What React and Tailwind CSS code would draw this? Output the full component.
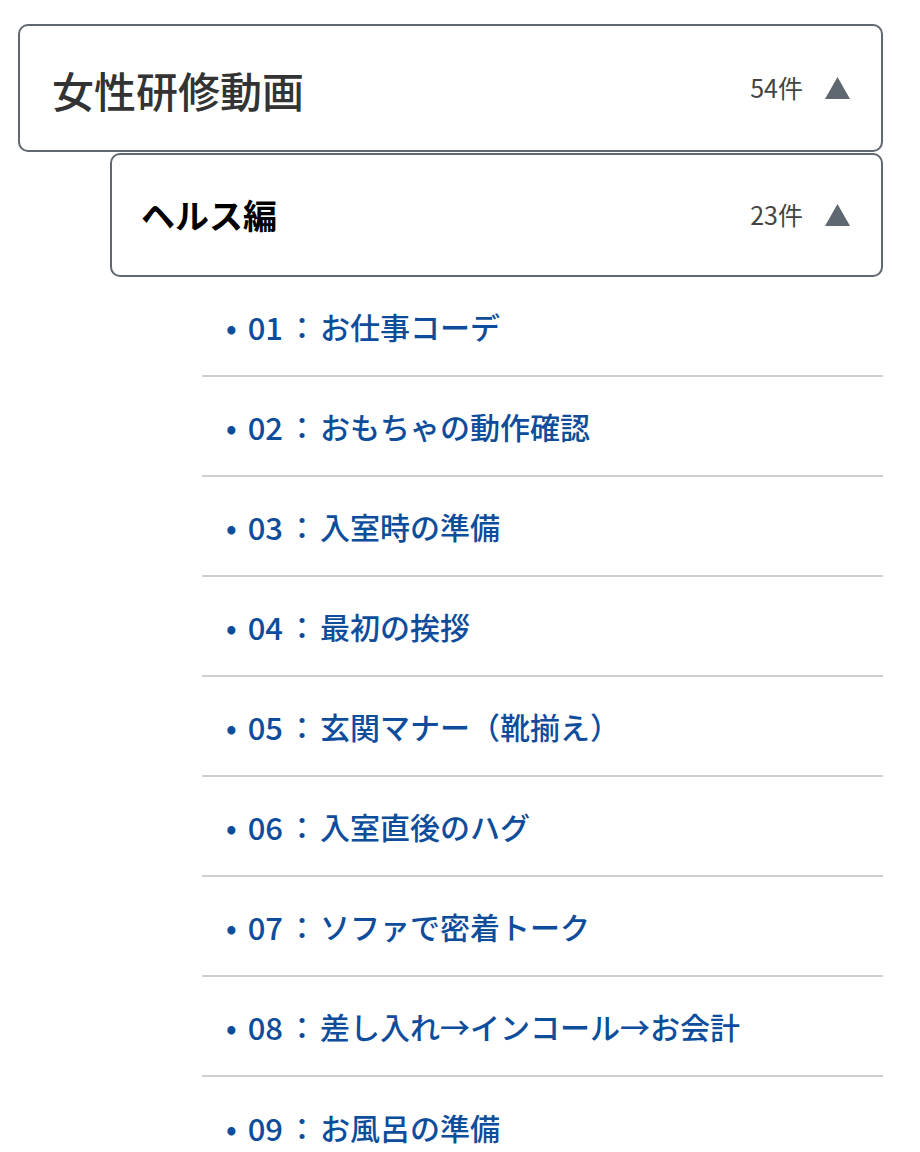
import React from "react";

const items = [
  ["01", "お仕事コーデ"],
  ["02", "おもちゃの動作確認"],
  ["03", "入室時の準備"],
  ["04", "最初の挨拶"],
  ["05", "玄関マナー（靴揃え）"],
  ["06", "入室直後のハグ"],
  ["07", "ソファで密着トーク"],
  ["08", "差し入れ→インコール→お会計"],
  ["09", "お風呂の準備"],
];

const font = { fontFamily: '"Noto Sans CJK JP", "Noto Sans", sans-serif' };

const Triangle = () => (
  <svg width="25" height="22" viewBox="0 0 25 22" className="shrink-0">
    <polygon points="12.5,0 25,22 0,22" fill="#5f6770" />
  </svg>
);

export default function App() {
  return (
    <div className="w-[920px] bg-white pt-[24px]" style={font}>
      <div className="ml-[18px] w-[865px] h-[128px] border-2 border-[#5f6770] rounded-[10px] flex items-center pl-[32px] pr-[31px]">
        <h1 className="flex-1 pt-[4px] text-[42px] font-medium text-[#333333] leading-none">女性研修動画</h1>
        <span className="text-[25px] text-[#444444] mr-[22px]">54件</span>
        <Triangle />
      </div>
      <div className="ml-[110px] mt-px w-[773px] h-[124px] border-2 border-[#5f6770] rounded-[10px] flex items-center pl-[29px] pr-[31px]">
        <h2 className="flex-1 text-[34px] font-bold text-black leading-none">ヘルス編</h2>
        <span className="text-[25px] text-[#444444] mr-[22px]">23件</span>
        <Triangle />
      </div>
      <ul className="ml-[202px] w-[681px]">
        {items.map(([n, t], i) => (
          <li
            key={n}
            className={`h-[100px] flex items-center pl-[24px] text-[30px] font-medium text-[#0e4d9b] leading-none ${i < items.length - 1 ? "border-b-2 border-[#cfcfd2]" : ""}`}
          >
            <span className="mr-[11px]">•</span>
            <span className="text-[31px]">{n}</span>
            <span className="ml-[4px] mr-[3px]">：</span>
            <span>{t}</span>
          </li>
        ))}
      </ul>
    </div>
  );
}
